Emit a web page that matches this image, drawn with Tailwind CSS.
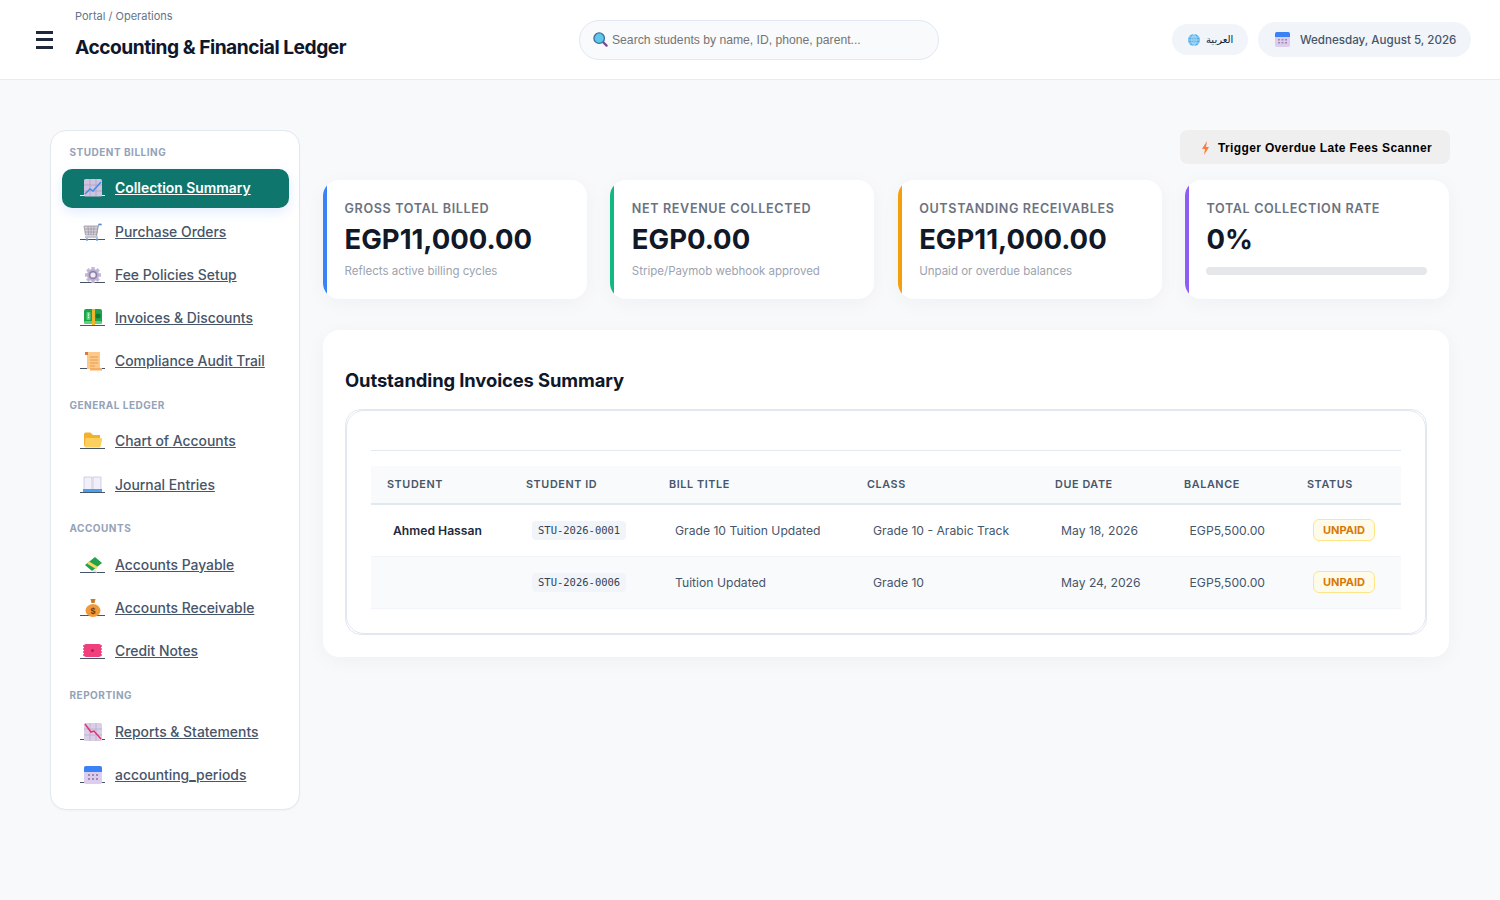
<!doctype html>
<html lang="en">
<head>
<meta charset="utf-8">
<title>Accounting & Financial Ledger</title>
<script src="https://cdn.jsdelivr.net/npm/@tailwindcss/browser@4"></script>
</head>
<body class="m-0 h-[900px] overflow-hidden bg-[#f8f9fb] font-['Inter',sans-serif] text-[#1e293b]">
<header class="flex h-[80px] items-center border-b border-[#e8ebf2] bg-white pl-[36px] pr-[29px]">
  <div class="flex w-[17px] flex-col gap-[4.5px]">
    <span class="h-[3px] bg-[#1e293b]"></span><span class="h-[3px] bg-[#1e293b]"></span><span class="h-[3px] bg-[#1e293b]"></span>
  </div>
  <div class="ml-[22px] w-[504px] self-start pt-[9px]">
    <div class="text-[11px] leading-[15px] text-[#64748b]">Portal / Operations</div>
    <h1 class="mt-[9px] text-[19.2px] leading-[28px] font-bold tracking-[-0.48px] text-[#0f172a]">Accounting &amp; Financial Ledger</h1>
  </div>
  <div class="flex h-[40px] w-[360px] items-center rounded-full border border-[#e2e8f0] bg-[#f8fafc] pl-[13px] font-['Liberation_Sans',sans-serif] text-[12.16px] text-[#757575]">
    <svg class="mr-[4px] shrink-0" width="15" height="15" viewBox="0 0 16 16"><path d="M10.5 10.5 14.5 14.5" stroke="#7d4a8c" stroke-width="2.4" stroke-linecap="round"/><circle cx="6.6" cy="6.6" r="5.6" fill="#5ec8e8" stroke="#3f6c9e" stroke-width="1.4"/></svg>
    <span class="pt-[1px]">Search students by name, ID, phone, parent...</span>
  </div>
  <div class="ml-auto flex items-center gap-[10px]">
    <div class="flex h-[31px] w-[76px] items-center rounded-full bg-[#f1f5f9] pl-[16px] text-[10px] font-medium text-[#0f172a]">
      <svg class="mr-[6px] shrink-0" width="12" height="12" viewBox="0 0 12 12"><circle cx="6" cy="6" r="6" fill="#55aeea"/><path d="M0 6h12M1 3h10M1 9h10M6 0v12M6 0C3 3 3 9 6 12M6 0c3 3 3 9 0 12" stroke="#c5e6fa" stroke-width=".7" fill="none"/></svg>
      <span class="font-['DejaVu_Sans',sans-serif]">العربية</span>
    </div>
    <div class="flex h-[35px] w-[213px] items-center rounded-full bg-[#f1f5f9] pl-[17px] text-[11.6px] font-medium whitespace-nowrap text-[#475569]">
      <svg class="mr-[10px] shrink-0" width="15" height="15" viewBox="0 0 15 15"><rect width="15" height="15" rx="2" fill="#dccdec"/><path d="M0 2a2 2 0 0 1 2-2h11a2 2 0 0 1 2 2v3H0z" fill="#3b82f6"/><path d="M3 7h2v1.5H3zM6.5 7h2v1.5h-2zM10 7h2v1.5h-2zM3 10h2v1.5H3zM6.5 10h2v1.5h-2zM10 10h2v1.5h-2z" fill="#9b8bb4"/></svg>
      <span class="pt-[2px]">Wednesday, August 5, 2026</span>
    </div>
  </div>
</header>

<div class="flex items-start gap-[23px] pt-[50px] pl-[50px] pr-[50px]">
  <aside class="h-[680px] w-[250px] shrink-0 rounded-[16px] border border-[#e2e8f0] bg-white pt-[14px] pr-[10px] pl-[11px] text-[13.9px] font-medium text-[#475569] shadow-[0_1px_2px_rgba(15,23,42,0.03)]">
    <div class="pl-[7.500px] text-[10px] leading-[14px] font-bold tracking-[0.5px] text-[#94a3b8]">STUDENT BILLING</div>
    <nav class="mt-[10px] flex flex-col">
      <a class="flex h-[39px] items-center gap-[10px] rounded-[10px] bg-[#0f766e] pl-[18px] font-semibold text-white underline shadow-[0_4px_12px_rgba(59,130,246,0.15)]">
        <span class="mb-[2px] flex h-[17px] w-[25px] justify-center border-b border-white"><svg width="18" height="18" viewBox="0 0 18 18"><rect width="18" height="17.500" rx="1.5" fill="#cfc3e0"/><path d="M6 0v17M12 0v17M0 6h18M0 12h18" stroke="#a99bc2" stroke-width=".7"/><path d="M1 15 6 10l3 2 8-9" stroke="#3b8fe8" stroke-width="1.5" fill="none"/></svg></span>Collection Summary</a>
      <a class="mt-[5px] flex h-[38px] items-center gap-[10px] pl-[18px] underline">
        <span class="mb-[2px] flex h-[17px] w-[25px] justify-center border-b border-[#475569]"><svg width="19" height="18" viewBox="0 0 19 18"><path d="M13.500 13 15.500 1.500h3" stroke="#a9a5b2" stroke-width="1" fill="none"/><path d="M15.500 1.500h3" stroke="#4c8fd8" stroke-width="1.800"/><path d="M1 3h14l-1.500 9H2.500z" fill="#d5d2da" stroke="#98949f" stroke-width=".8"/><path d="M5 3l.5 9M8 3v9M11 3l-.5 9M1.500 6h13M2 9h12" stroke="#98949f" stroke-width=".7"/><path d="M2 14h13" stroke="#c9c3d4" stroke-width="2"/><circle cx="4" cy="16.500" r="1.300" fill="#5c95d6"/><circle cx="14" cy="16.500" r="1.300" fill="#5c95d6"/></svg></span>Purchase Orders</a>
      <a class="mt-[5px] flex h-[38px] items-center gap-[10px] pl-[18px] underline">
        <span class="mb-[2px] flex h-[17px] w-[25px] justify-center border-b border-[#475569]"><svg width="18" height="18" viewBox="0 0 18 18"><path d="M9 1v16M1 9h16M3.300 3.300l11.400 11.400M14.700 3.300 3.300 14.700" stroke="#c4bad6" stroke-width="3.400"/><circle cx="9" cy="9" r="6" fill="#bdb2d0"/><circle cx="9" cy="9" r="4.300" fill="#8d80aa"/><circle cx="9" cy="9" r="2.600" fill="#f0ecf6"/></svg></span>Fee Policies Setup</a>
      <a class="mt-[5px] flex h-[38px] items-center gap-[10px] pl-[18px] underline">
        <span class="mb-[2px] flex h-[17px] w-[25px] justify-center border-b border-[#475569]"><svg width="18" height="16" viewBox="0 0 18 16"><rect width="18" height="15" rx="2" fill="#1fa34a"/><rect y="12" width="18" height="3" rx="1.500" fill="#5ed07e"/><rect x="2.500" y="3" width="4" height="8" rx="1" fill="#5ed07e"/><path d="M4.500 4.500v5" stroke="#fff" stroke-width="1.100" stroke-dasharray="1 .8"/><circle cx="14" cy="7" r="2.500" fill="#0d7a36"/><rect x="8" width="3" height="16" fill="#efb52f"/></svg></span>Invoices &amp; Discounts</a>
      <a class="mt-[5px] flex h-[38px] items-center gap-[10px] pl-[18px] underline">
        <span class="mb-[2px] flex h-[17px] w-[25px] justify-center border-b border-[#475569]"><svg width="18" height="19" viewBox="0 0 18 19"><rect x="3" y="0" width="13" height="17" fill="#fbc98a"/><path d="M6 5h8M6 8h8M6 11h8M6 14h5" stroke="#e99a4f"/><path d="M1 0h3v3H1z" fill="#d9793a"/><path d="M6 16h12v2.500H6z" fill="#f6ae66"/></svg></span>Compliance Audit Trail</a>
    </nav>
    <div class="mt-[18px] pl-[7.500px] text-[10px] leading-[14px] font-bold tracking-[0.5px] text-[#94a3b8]">GENERAL LEDGER</div>
    <nav class="mt-[10px] flex flex-col">
      <a class="flex h-[39px] items-center gap-[10px] pl-[18px] underline">
        <span class="mb-[2px] flex h-[17px] w-[25px] justify-center border-b border-[#475569]"><svg width="18" height="16" viewBox="0 0 18 16"><path d="M0 2a1.500 1.500 0 0 1 1.500-1.500h5L9 3h7v11H0z" fill="#f3b02e"/><path d="M1.500 6H16.500a1.500 1.500 0 0 1 1.500 1.800L16.500 14.500a1.500 1.500 0 0 1-1.500 1H2a1.500 1.500 0 0 1-1.500-1.500z" fill="#fdcf5c"/></svg></span>Chart of Accounts</a>
      <a class="mt-[5px] flex h-[39px] items-center gap-[10px] pl-[18px] underline">
        <span class="mb-[2px] flex h-[17px] w-[25px] justify-center border-b border-[#475569]"><svg width="19" height="16" viewBox="0 0 19 16"><path d="M1 1h8v13H1zM10 1h8v13h-8z" fill="#f0effa" stroke="#c3c0d8" stroke-width=".7"/><path d="M0 13h19v3H0z" fill="#4aa3ea"/></svg></span>Journal Entries</a>
    </nav>
    <div class="mt-[16px] pl-[7.500px] text-[10px] leading-[14px] font-bold tracking-[0.5px] text-[#94a3b8]">ACCOUNTS</div>
    <nav class="mt-[11px] flex flex-col">
      <a class="flex h-[38px] items-center gap-[10px] pl-[18px] underline">
        <span class="mb-[2px] flex h-[17px] w-[25px] justify-center border-b border-[#475569]"><svg width="18" height="18" viewBox="0 0 18 18"><path d="M1 9 11 1l7 6L8 15z" fill="#1fa34a"/><path d="M4 6.500 13 12" stroke="#f3d36a" stroke-width="3"/><path d="M8 15l4-1 1 3z" fill="#dcdce8"/></svg></span>Accounts Payable</a>
      <a class="mt-[5px] flex h-[38px] items-center gap-[10px] pl-[18px] underline">
        <span class="mb-[2px] flex h-[17px] w-[25px] justify-center border-b border-[#475569]"><svg width="16" height="18" viewBox="0 0 16 18"><path d="M5.500 0h5L9.500 4h-3z" fill="#c97a2a"/><ellipse cx="8" cy="11.500" rx="7.500" ry="6.500" fill="#ef9a3d"/><text x="8" y="15" text-anchor="middle" font-size="9" font-weight="700" font-family="Liberation Sans" fill="#6b3a10">$</text></svg></span>Accounts Receivable</a>
      <a class="mt-[5px] flex h-[38px] items-center gap-[10px] pl-[18px] underline">
        <span class="mb-[2px] flex h-[17px] w-[25px] justify-center border-b border-[#475569]"><svg width="19" height="13" viewBox="0 0 19 13" class="mt-[2px]"><rect x="1" width="17" height="13" rx="2" fill="#ef3f7c"/><path d="M0 2h2M0 5h2M0 8h2M0 11h2M17 2h2M17 5h2M17 8h2M17 11h2" stroke="#ef3f7c" stroke-width="1.400"/><circle cx="9.500" cy="6.500" r="1.500" fill="#b81f55"/></svg></span>Credit Notes</a>
    </nav>
    <div class="mt-[18px] pl-[7.500px] text-[10px] leading-[14px] font-bold tracking-[0.5px] text-[#94a3b8]">REPORTING</div>
    <nav class="mt-[11px] flex flex-col">
      <a class="flex h-[39px] items-center gap-[10px] pl-[18px] underline">
        <span class="mb-[2px] flex h-[17px] w-[25px] justify-center border-b border-[#475569]"><svg width="18" height="18" viewBox="0 0 18 18"><rect width="18" height="18" rx="1.500" fill="#d9cfe6"/><path d="M6 0v18M12 0v18M0 6h18M0 12h18" stroke="#b8abcb" stroke-width=".7"/><path d="M1 1l6 8 3-1 7 8" stroke="#e8326e" stroke-width="1.500" fill="none"/></svg></span>Reports &amp; Statements</a>
      <a class="mt-[4px] flex h-[39px] items-center gap-[10px] pl-[18px] underline">
        <span class="mb-[2px] flex h-[17px] w-[25px] justify-center border-b border-[#475569]"><svg width="18" height="18" viewBox="0 0 18 18"><rect width="18" height="18" rx="2" fill="#dccdec"/><path d="M0 2a2 2 0 0 1 2-2h14a2 2 0 0 1 2 2v4H0z" fill="#3b82f6"/><path d="M4 8h2v2H4zM8 8h2v2H8zM12 8h2v2h-2zM4 12h2v2H4zM8 12h2v2H8zM12 12h2v2h-2z" fill="#9b8bb4"/></svg></span>accounting_periods</a>
    </nav>
  </aside>

  <main class="w-[1127px] shrink-0">
    <div class="flex justify-end">
      <div class="flex h-[34px] w-[270px] items-center rounded-[8px] bg-[#efefef] pt-[1px] pl-[21px] font-['Liberation_Sans',sans-serif] text-[12px] font-bold tracking-[0.36px] text-black">
        <svg class="mr-[8px] shrink-0" width="9" height="14" viewBox="0 0 9 14"><path d="M6 0 1 8h3l-1 6 5-8H5z" fill="#f97b3d"/></svg>
        <span>Trigger Overdue Late Fees Scanner</span>
      </div>
    </div>
    <div class="mt-[16px] grid w-[1126px] grid-cols-4 gap-[23.33px]">
      <div class="flex h-[119px] overflow-hidden rounded-[16px] bg-white shadow-[0_4px_20px_rgba(15,23,42,0.04)]">
        <div class="w-[4px] shrink-0 bg-[#3b82f6]"></div>
        <div class="min-w-0 flex-1 pt-[21px] pr-[22px] pl-[17.500px]">
          <div class="text-[12.6px] leading-[16px] font-semibold tracking-[0.63px] whitespace-nowrap text-[#6b7280]">GROSS TOTAL BILLED</div>
          <div class="mt-[4px] text-[27.5px] leading-[36px] font-bold text-[#111827]">EGP11,000.00</div>
          <div class="mt-[6px] text-[11.5px] leading-[16px] text-[#9ca3af]">Reflects active billing cycles</div>
        </div>
      </div>
      <div class="flex h-[119px] overflow-hidden rounded-[16px] bg-white shadow-[0_4px_20px_rgba(15,23,42,0.04)]">
        <div class="w-[4px] shrink-0 bg-[#10b981]"></div>
        <div class="min-w-0 flex-1 pt-[21px] pr-[22px] pl-[17.500px]">
          <div class="text-[12.6px] leading-[16px] font-semibold tracking-[0.63px] whitespace-nowrap text-[#6b7280]">NET REVENUE COLLECTED</div>
          <div class="mt-[4px] text-[27.5px] leading-[36px] font-bold text-[#111827]">EGP0.00</div>
          <div class="mt-[6px] text-[11.5px] leading-[16px] text-[#9ca3af]">Stripe/Paymob webhook approved</div>
        </div>
      </div>
      <div class="flex h-[119px] overflow-hidden rounded-[16px] bg-white shadow-[0_4px_20px_rgba(15,23,42,0.04)]">
        <div class="w-[4px] shrink-0 bg-[#f59e0b]"></div>
        <div class="min-w-0 flex-1 pt-[21px] pr-[22px] pl-[17.500px]">
          <div class="text-[12.6px] leading-[16px] font-semibold tracking-[0.63px] whitespace-nowrap text-[#6b7280]">OUTSTANDING RECEIVABLES</div>
          <div class="mt-[4px] text-[27.5px] leading-[36px] font-bold text-[#111827]">EGP11,000.00</div>
          <div class="mt-[6px] text-[11.5px] leading-[16px] text-[#9ca3af]">Unpaid or overdue balances</div>
        </div>
      </div>
      <div class="flex h-[119px] overflow-hidden rounded-[16px] bg-white shadow-[0_4px_20px_rgba(15,23,42,0.04)]">
        <div class="w-[4px] shrink-0 bg-[#8b5cf6]"></div>
        <div class="min-w-0 flex-1 pt-[21px] pr-[22px] pl-[17.500px]">
          <div class="text-[12.6px] leading-[16px] font-semibold tracking-[0.63px] whitespace-nowrap text-[#6b7280]">TOTAL COLLECTION RATE</div>
          <div class="mt-[4px] text-[27.5px] leading-[36px] font-bold text-[#111827]">0%</div>
          <div class="mt-[10px] h-[8px] rounded-full bg-[#e5e7eb]"></div>
        </div>
      </div>
    </div>
    <section class="mt-[31px] h-[327px] w-[1126px] rounded-[16px] bg-white px-[22px] pt-[37px] shadow-[0_4px_20px_rgba(15,23,42,0.04)]">
      <h2 class="text-[18.4px] leading-[26px] font-bold tracking-[-0.1px] text-[#0f172a]">Outstanding Invoices Summary</h2>
      <div class="mt-[16px] h-[226px] rounded-[16px] border border-[#e2e8f0]">
        <div class="h-full rounded-[18px] border border-[#e2e8f0] px-[24px] pt-[39px]">
          <div class="w-[1030px] border-t border-[#e2e8f0] pt-[15px]">
            <table class="w-[1030px] table-fixed text-[12.16px] text-[#475569]">
              <colgroup><col class="w-[139px]"><col class="w-[143px]"><col class="w-[198px]"><col class="w-[188px]"><col class="w-[129px]"><col class="w-[123px]"><col class="w-[110px]"></colgroup>
              <thead><tr class="h-[38px] border-b-2 border-[#e2e8f0] bg-[#f8fafc] text-left text-[10.8px] tracking-[0.6px] text-[#475569]">
                <th class="pt-[1px] pl-[16px] font-semibold">STUDENT</th><th class="pt-[1px] pl-[16px] font-semibold">STUDENT ID</th><th class="pt-[1px] pl-[16px] font-semibold">BILL TITLE</th><th class="pt-[1px] pl-[16px] font-semibold">CLASS</th><th class="pt-[1px] pl-[16px] font-semibold">DUE DATE</th><th class="pt-[1px] pl-[16px] font-semibold">BALANCE</th><th class="pt-[1px] pl-[16px] font-semibold">STATUS</th>
              </tr></thead>
              <tbody>
                <tr class="border-b border-[#f1f5f9]">
                  <td><div class="flex h-[51px] items-center pt-[1px] pl-[22px] font-semibold text-[#1e293b]">Ahmed Hassan</div></td>
                  <td><div class="flex h-[51px] items-center pl-[22px]"><span class="rounded-[4px] bg-[#f1f5f9] px-[6px] py-[2px] font-['DejaVu_Sans_Mono',monospace] text-[10.5px] leading-[15px] text-[#334155]">STU-2026-0001</span></div></td>
                  <td><div class="flex h-[51px] items-center pt-[1px] pl-[22px]">Grade 10 Tuition Updated</div></td>
                  <td><div class="flex h-[51px] items-center pt-[1px] pl-[22px]">Grade 10 - Arabic Track</div></td>
                  <td><div class="flex h-[51px] items-center pt-[1px] pl-[22px]">May 18, 2026</div></td>
                  <td><div class="flex h-[51px] items-center pt-[1px] pl-[21.500px]">EGP5,500.00</div></td>
                  <td><div class="flex h-[51px] items-center pl-[22px]"><span class="mb-[1px] h-[22px] w-[62px] rounded-[6px] border border-[#fde68a] bg-[#fffbeb] text-center text-[11px] leading-[20px] font-bold text-[#d97706]">UNPAID</span></div></td>
                </tr>
                <tr class="border-b border-[#f1f5f9] bg-[#f8fafc]">
                  <td><div class="h-[51px]"></div></td>
                  <td><div class="flex h-[51px] items-center pl-[22px]"><span class="rounded-[4px] bg-[#f1f5f9] px-[6px] py-[2px] font-['DejaVu_Sans_Mono',monospace] text-[10.5px] leading-[15px] text-[#334155]">STU-2026-0006</span></div></td>
                  <td><div class="flex h-[51px] items-center pt-[1px] pl-[22px]">Tuition Updated</div></td>
                  <td><div class="flex h-[51px] items-center pt-[1px] pl-[22px]">Grade 10</div></td>
                  <td><div class="flex h-[51px] items-center pt-[1px] pl-[22px]">May 24, 2026</div></td>
                  <td><div class="flex h-[51px] items-center pt-[1px] pl-[21.500px]">EGP5,500.00</div></td>
                  <td><div class="flex h-[51px] items-center pl-[22px]"><span class="mb-[1px] h-[22px] w-[62px] rounded-[6px] border border-[#fde68a] bg-[#fffbeb] text-center text-[11px] leading-[20px] font-bold text-[#d97706]">UNPAID</span></div></td>
                </tr>
              </tbody>
            </table>
          </div>
        </div>
      </div>
    </section>
  </main>
</div>
</body>
</html>
